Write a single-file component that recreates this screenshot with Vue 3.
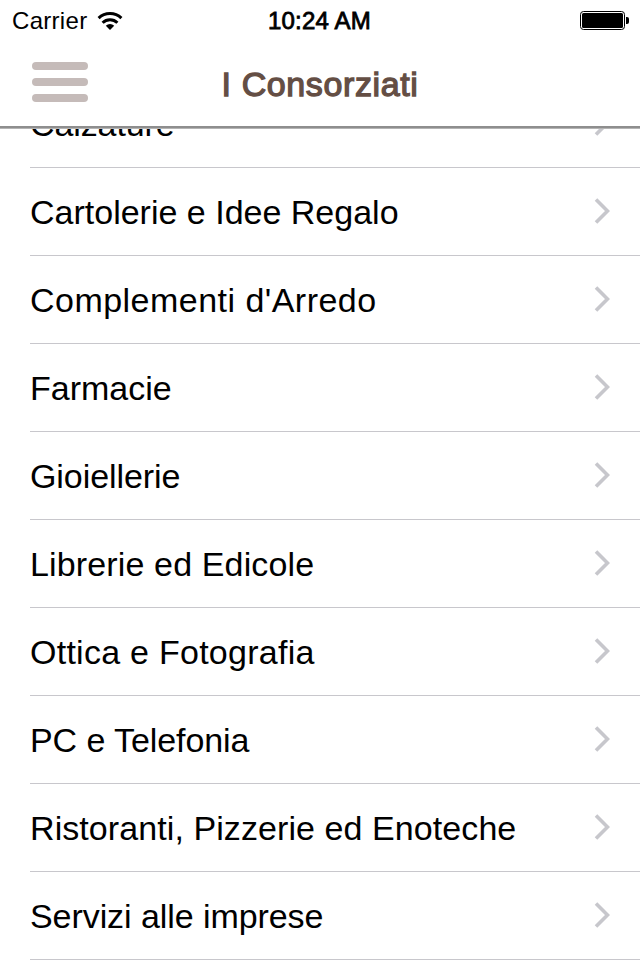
<script setup>
import { ref } from 'vue'

const title = ref('I Consorziati')

// spacing: letter spacing of the label, in px
const categories = ref([
    { id: 1, name: 'Calzature', spacing: -0.1 },
    { id: 2, name: 'Cartolerie e Idee Regalo', spacing: 0 },
    { id: 3, name: "Complementi d'Arredo", spacing: 0.47 },
    { id: 4, name: 'Farmacie', spacing: 0 },
    { id: 5, name: 'Gioiellerie', spacing: -0.08 },
    { id: 6, name: 'Librerie ed Edicole', spacing: 0.14 },
    { id: 7, name: 'Ottica e Fotografia', spacing: 0.26 },
    { id: 8, name: 'PC e Telefonia', spacing: -0.08 },
    { id: 9, name: 'Ristoranti, Pizzerie ed Enoteche', spacing: 0.08 },
    { id: 10, name: 'Servizi alle imprese', spacing: -0.07 }
])
</script>

<template>
    <div class="screen">
        <header class="header">
            <div class="statusbar">
                <div class="carrier">
                    <span>Carrier</span>
                    <svg class="wifi" width="26" height="18" viewBox="0 0 26 18">
                        <path d="M1.6 6.2A16.4 16.4 0 0 1 24.4 6.2" />
                        <path d="M5.6 10.7A10.6 10.6 0 0 1 20.4 10.7" />
                        <path class="dot" d="M13 18L8.8 13.8A6 6 0 0 1 17.2 13.8Z" />
                    </svg>
                </div>
                <span class="time">10:24 AM</span>
                <div class="power">
                    <svg width="49" height="19" viewBox="0 0 49 19">
                        <rect x="0.5" y="0.5" width="44" height="18" rx="3" fill="none" stroke="#000" />
                        <rect x="2" y="2" width="41" height="15" rx="1.5" />
                        <path d="M46 6h1a2 2 0 0 1 2 2v3a2 2 0 0 1-2 2h-1z" />
                    </svg>
                </div>
            </div>
            <div class="navbar">
                <button class="menu" type="button">
                    <i></i>
                    <i></i>
                    <i></i>
                </button>
                <h1 class="title">{{ title }}</h1>
            </div>
        </header>

        <main class="content">
            <ul class="list">
                <li v-for="item in categories" :key="item.id" class="row">
                    <span :style="{ letterSpacing: item.spacing + 'px' }">{{ item.name }}</span>
                    <svg class="chevron" width="16" height="26" viewBox="0 0 16 26">
                        <path d="M2 1.5L13.5 13L2 24.5" />
                    </svg>
                </li>
            </ul>
        </main>
    </div>
</template>

<style>
body {
    margin: 0;
    background: #fff;
}
</style>

<style scoped>
.screen {
    display: flex;
    flex-direction: column;
    width: 640px;
    height: 960px;
    overflow: hidden;
    background: #fff;
    color: #000;
    font-family: "Liberation Sans", Arial, sans-serif;
}

.header {
    flex: none;
    box-sizing: border-box;
    height: 129px;
    border-bottom: 1px solid #b4b4b4;
    box-shadow: inset 0 -2px #8e8e8e;
}

/* Status bar */
.statusbar {
    display: grid;
    grid-template-columns: 1fr auto 1fr;
    align-items: center;
    height: 40px;
    padding: 0 11px 0 12px;
    font-size: 24px;
    line-height: 40px;
}

.carrier {
    display: flex;
    align-items: center;
    gap: 10px;
    padding-top: 1px;
    letter-spacing: 0.3px;
}

.wifi {
    margin-bottom: 1px;
    fill: none;
    stroke: #000;
    stroke-width: 3;
}

.wifi .dot {
    fill: #000;
    stroke: none;
}

.time {
    margin-left: -2px;
    padding-top: 1px;
    letter-spacing: 0.2px;
    -webkit-text-stroke: 0.8px #000;
}

.power {
    display: flex;
    justify-content: flex-end;
}

/* Navigation bar */
.navbar {
    display: grid;
    grid-template-columns: 120px 1fr 120px;
    align-items: center;
    height: 86px;
}

.menu {
    display: flex;
    flex-direction: column;
    gap: 8px;
    width: 56px;
    margin: 0 0 2px 32px;
    padding: 0;
    border: 0;
    background: none;
}

.menu i {
    height: 8px;
    border-radius: 4px;
    background: #c5bbb9;
}

.title {
    margin: 0;
    padding-top: 2px;
    color: #644e44;
    font-size: 34px;
    font-weight: normal;
    line-height: 40px;
    letter-spacing: 0.6px;
    text-align: center;
    -webkit-text-stroke: 1.3px #644e44;
}

/* The list is scrolled a bit under the header */
.content {
    flex: 1;
    min-height: 0;
    overflow: hidden;
}

.list {
    margin: -49px 0 0;
    padding: 0 0 0 30px;
    list-style: none;
}

.row {
    display: flex;
    align-items: center;
    justify-content: space-between;
    box-sizing: border-box;
    height: 88px;
    padding-right: 30px;
    border-bottom: 1px solid #c8c7cc;
    font-size: 34px;
    line-height: 40px;
    white-space: nowrap;
}

.chevron {
    margin-bottom: 2px;
    fill: none;
    stroke: #c7c7cc;
    stroke-width: 3.6;
}
</style>
